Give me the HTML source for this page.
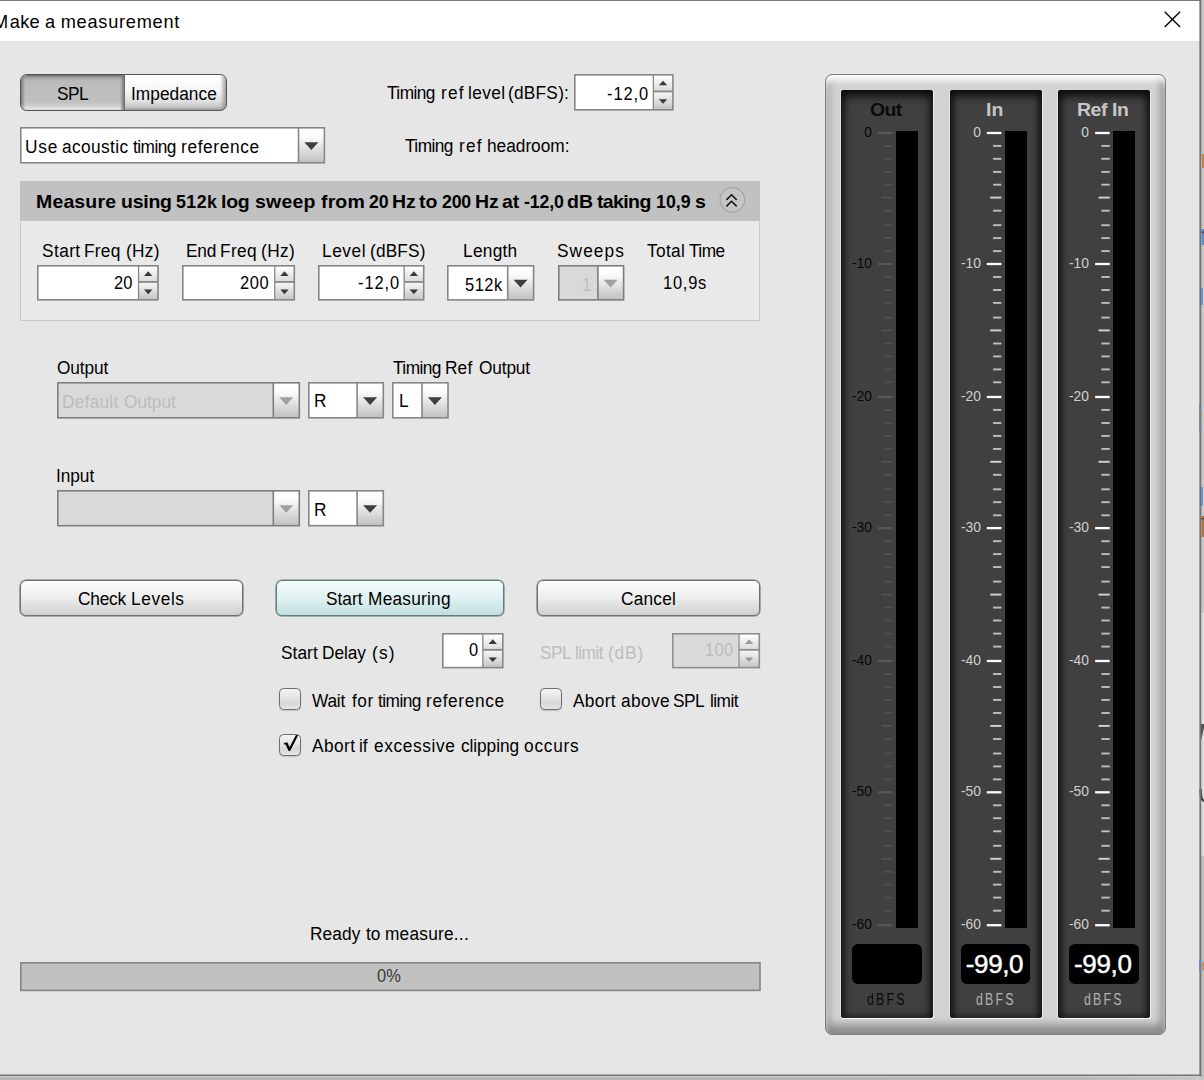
<!DOCTYPE html><html><head><meta charset="utf-8"><title>Make a measurement</title><style>
*{box-sizing:border-box;margin:0;padding:0}
html,body{width:1204px;height:1080px;overflow:hidden;background:#e6e6e6;font-family:"Liberation Sans",sans-serif;font-size:17.33px;color:#000}
.a{position:absolute}
.t{position:absolute;white-space:pre;line-height:20px;height:20px;transform-origin:0 50%}
.b{font-weight:bold}
.dis{color:#bdbdbd}
#title{position:absolute;left:0;top:0;width:1200px;height:41px;background:#fff;border-top:1px solid #7c7c7c}
.field{position:absolute;background:#fff;border:1px solid #7a7a7a}
.field.d{background:#dbdbdb;border-color:#858585}
.sp{position:absolute;right:0;top:0;bottom:0;border-left:1px solid #a0a0a0;background:linear-gradient(#fbfbfb 0%,#dcdcdc 47%,#9a9a9a 47%,#9a9a9a 51%,#f4f4f4 51%,#cfcfcf 100%)}
.arr{position:absolute;right:0;top:0;bottom:0;background:linear-gradient(#fafafa,#e4e4e4 50%,#c6c6c6);border-left:1px solid #a0a0a0}
.btn{position:absolute;border:1px solid #707070;border-radius:6px;background:linear-gradient(#fefefe 0%,#ededed 50%,#cfcfcf 100%);box-shadow:0 0 0 0.55px #707070}
.cb{position:absolute;width:22px;height:22px;border:1.5px solid #6b6e76;border-radius:4.5px;background:linear-gradient(#f3f3f3 0,#e4e4e4 45%,#d6d6d6 70%,#e6e6e6 100%);box-shadow:0 1px 1px rgba(120,125,140,.35)}
svg{position:absolute;overflow:visible}
</style></head><body>
<div id="title"></div>
<div class="t" style="left:-7.00px;top:11.69px;font-size:18.2px;">M</div>
<div class="t" style="left:9.70px;top:11.69px;font-size:18.2px;letter-spacing:0.339px;">ake</div>
<div class="t" style="left:45.00px;top:11.69px;font-size:18.2px;">a</div>
<div class="t" style="left:60.70px;top:11.69px;font-size:18.2px;letter-spacing:0.749px;">measurement</div>
<svg class="a" style="left:1164px;top:11px" width="17" height="17"><path d="M0.7 0.7L16.1 16.1M16.1 0.7L0.7 16.1" stroke="#000" stroke-width="1.35" fill="none"/></svg>
<div class="a" style="left:1201px;top:0;width:3px;height:613px;background:linear-gradient(90deg,#b2b2b2,#d4d4d4)"></div>
<div class="a" style="left:1201px;top:613px;width:3px;height:243px;background:linear-gradient(90deg,#c6c6c6,#e6e6e6)"></div>
<div class="a" style="left:1201px;top:856px;width:3px;height:224px;background:linear-gradient(90deg,#a8a8a8,#cacaca)"></div>
<div class="a" style="left:0;top:1077px;width:1204px;height:3px;background:linear-gradient(90deg,#b6b6b6 0,#b8b8b8 90%,#c8c8c8 100%)"></div>
<svg class="a" style="left:0;top:0" width="1204" height="1080"><rect x="1202" y="154" width="2" height="14" fill="#c8803c"/><rect x="1201.5" y="229" width="2.5" height="16" fill="#5e8cd2"/><rect x="1200" y="231.5" width="4" height="1.5" fill="#555"/><rect x="1200.5" y="288" width="2.3" height="17" fill="#5f8fd6"/><rect x="1203" y="411" width="1" height="13" fill="#f0c48a"/><rect x="1200.5" y="487" width="2.3" height="19" fill="#5f8fd6"/><rect x="1201.5" y="516" width="2.5" height="21" fill="#b4743a"/><rect x="1200" y="518" width="4" height="1.5" fill="#555"/><path d="M1200 724H1204V728L1200.8 741H1200Z" fill="#555"/><path d="M1200.5 789Q1200.5 799.5 1204 801" stroke="#444" stroke-width="2.4" fill="none"/><rect x="1202" y="962" width="2" height="8" fill="#d09050"/><rect x="1199.4" y="0" width="1.7" height="1076.2" fill="#727272"/><rect x="0" y="1074.5" width="1201.1" height="1.7" fill="#727272"/><rect x="1199.4" y="404" width="1.7" height="28" fill="#5f7f9f"/><rect x="1199.4" y="960" width="1.7" height="11" fill="#5a7fc0"/></svg>
<div class="a" style="left:19.5px;top:74px;width:207.5px;height:37px;border:1.4px solid #555;border-radius:7px;overflow:hidden;background:linear-gradient(#ffffff 0,#f6f6f6 45%,#e0e0e0 75%,#c8c8c8 90%,#9c9c9c 100%);box-shadow:0 0 0.5px #555"><div class="a" style="right:0;top:0;width:6px;height:100%;background:linear-gradient(90deg,rgba(140,140,140,0),rgba(130,130,130,.75))"></div><div class="a" style="left:0;top:0;width:104px;height:100%;background:linear-gradient(#6c6c6c 0,#a2a2a2 2.5px,#bbbbbb 6px,#c0c0c0 78%,#d4d4d4 90%,#f4f4f4 100%);border-right:1.2px solid #6a6a6a;box-shadow:inset 3.5px 0 3px -1.5px #7a7a7a,inset -3.5px 0 3px -1.5px #7a7a7a"></div></div>
<div class="t" style="left:56.71px;top:83.85px;font-size:19.2px;letter-spacing:-0.600px;transform:scaleX(0.9);">SPL</div>
<div class="t" style="left:130.77px;top:83.85px;font-size:19.2px;letter-spacing:0.046px;transform:scaleX(0.9);">Impedance</div>
<div class="t" style="left:387.30px;top:83.45px;font-size:19.2px;letter-spacing:-0.600px;transform:scaleX(0.9);">Timing</div>
<div class="t" style="left:441.13px;top:83.45px;font-size:19.2px;letter-spacing:1.300px;transform:scaleX(0.9);">ref</div>
<div class="t" style="left:468.42px;top:83.45px;font-size:19.2px;letter-spacing:0.439px;transform:scaleX(0.9);">level</div>
<div class="t" style="left:508.41px;top:83.45px;font-size:19.2px;letter-spacing:0.264px;transform:scaleX(0.9);">(dBFS):</div>
<svg class="a" style="left:573.9px;top:73.9px" width="99.70000000000005" height="36.599999999999994"><defs><linearGradient id="g1a" x1="0" y1="0" x2="0" y2="1"><stop offset="0" stop-color="#ffffff"/><stop offset="1" stop-color="#dcdcdc"/></linearGradient><linearGradient id="g1b" x1="0" y1="0" x2="0" y2="1"><stop offset="0" stop-color="#f6f6f6"/><stop offset="1" stop-color="#c6c6c6"/></linearGradient></defs><rect x="0" y="0" width="99.70000000000005" height="36.599999999999994" fill="#868686"/><rect x="1.6" y="1.6" width="77.10" height="33.40" fill="#fff"/><rect x="79.98" y="1.6" width="18.12" height="14.95" fill="url(#g1a)"/><rect x="79.98" y="18.35" width="18.12" height="16.65" fill="url(#g1b)"/><path d="M84.84 11.36L93.24 11.36L89.04 6.66Z" fill="#383838"/><path d="M84.84 25.25L93.24 25.25L89.04 29.85Z" fill="#383838"/></svg>
<div class="t" style="left:607.31px;top:83.65px;font-size:19.2px;letter-spacing:1.068px;transform:scaleX(0.857);">-12,0</div>
<svg class="a" style="left:19.9px;top:127.1px" width="305.20000000000005" height="36.599999999999994"><defs><linearGradient id="g2" x1="0" y1="0" x2="0" y2="1"><stop offset="0" stop-color="#ffffff"/><stop offset="0.25" stop-color="#fbfbfb"/><stop offset="1" stop-color="#c2c2c2"/></linearGradient></defs><rect x="0" y="0" width="305.20000000000005" height="36.599999999999994" fill="#868686"/><rect x="1.6" y="1.6" width="276.10" height="33.40" fill="#fff"/><rect x="279.30" y="1.6" width="24.30" height="33.40" fill="url(#g2)"/><path d="M284.35 15.19L298.35 15.19L291.35 22.89Z" fill="#3e3e3e"/></svg>
<div class="t" style="left:25.34px;top:136.65px;font-size:19.2px;letter-spacing:0.906px;transform:scaleX(0.9);">Use</div>
<div class="t" style="left:61.88px;top:136.65px;font-size:19.2px;letter-spacing:0.441px;transform:scaleX(0.9);">acoustic</div>
<div class="t" style="left:133.49px;top:136.65px;font-size:19.2px;letter-spacing:-0.600px;transform:scaleX(0.9);">timing</div>
<div class="t" style="left:181.32px;top:136.65px;font-size:19.2px;letter-spacing:0.719px;transform:scaleX(0.9);">reference</div>
<div class="t" style="left:405.20px;top:136.45px;font-size:19.2px;letter-spacing:-0.600px;transform:scaleX(0.9);">Timing</div>
<div class="t" style="left:458.78px;top:136.45px;font-size:19.2px;letter-spacing:1.300px;transform:scaleX(0.9);">ref</div>
<div class="t" style="left:486.63px;top:136.45px;font-size:19.2px;letter-spacing:-0.011px;transform:scaleX(0.9);">headroom:</div>
<div class="a" style="left:20px;top:181px;width:740px;height:140px;background:#e9e9e9;border:1px solid #c8c8c8"></div>
<div class="a" style="left:20px;top:181px;width:740px;height:40px;background:#c1c1c1"></div>
<div class="t b" style="left:36.33px;top:191.92px;font-size:18.4px;letter-spacing:0.141px;transform:scaleX(1.06);">Measure</div>
<div class="t b" style="left:120.63px;top:191.92px;font-size:18.4px;letter-spacing:-0.244px;transform:scaleX(1.06);">using</div>
<div class="t b" style="left:176.12px;top:191.92px;font-size:18.4px;letter-spacing:0.490px;transform:scaleX(0.965);">512k</div>
<div class="t b" style="left:221.43px;top:191.92px;font-size:18.4px;letter-spacing:-0.267px;transform:scaleX(1.06);">log</div>
<div class="t b" style="left:254.96px;top:191.92px;font-size:18.4px;letter-spacing:0.211px;transform:scaleX(1.06);">sweep</div>
<div class="t b" style="left:320.68px;top:191.92px;font-size:18.4px;letter-spacing:0.126px;transform:scaleX(1.06);">from</div>
<div class="t b" style="left:369.49px;top:191.92px;font-size:18.4px;transform:scaleX(0.965);">20</div>
<div class="t b" style="left:392.36px;top:191.92px;font-size:18.4px;transform:scaleX(1.06);">Hz</div>
<div class="t b" style="left:419.33px;top:191.92px;font-size:18.4px;transform:scaleX(1.06);">to</div>
<div class="t b" style="left:442.22px;top:191.92px;font-size:18.4px;letter-spacing:-0.227px;transform:scaleX(0.965);">200</div>
<div class="t b" style="left:475.16px;top:191.92px;font-size:18.4px;transform:scaleX(1.06);">Hz</div>
<div class="t b" style="left:501.88px;top:191.92px;font-size:18.4px;transform:scaleX(1.06);">at</div>
<div class="t b" style="left:523.52px;top:191.92px;font-size:18.4px;letter-spacing:-0.126px;transform:scaleX(0.965);">-12,0</div>
<div class="t b" style="left:567.25px;top:191.92px;font-size:18.4px;transform:scaleX(1.06);">dB</div>
<div class="t b" style="left:597.29px;top:191.92px;font-size:18.4px;letter-spacing:-0.588px;transform:scaleX(1.06);">taking</div>
<div class="t b" style="left:656.14px;top:191.92px;font-size:18.4px;letter-spacing:0.039px;transform:scaleX(0.965);">10,9</div>
<div class="t b" style="left:695.20px;top:191.92px;font-size:18.4px;transform:scaleX(1.06);">s</div>
<svg class="a" style="left:712px;top:182px" width="40" height="36"><circle cx="20.4" cy="17.85" r="12.3" fill="#c5c5c5" stroke="#a8a8a8" stroke-width="1.4"/><path d="M14.4 17.9L19.55 12.8L24.7 17.9M14.4 24.4L19.55 19.3L24.7 24.4" stroke="#111" stroke-width="1.5" fill="none"/></svg>
<div class="t" style="left:41.78px;top:241.15px;font-size:19.2px;letter-spacing:0.458px;transform:scaleX(0.9);">Start</div>
<div class="t" style="left:83.95px;top:241.15px;font-size:19.2px;letter-spacing:0.289px;transform:scaleX(0.9);">Freq</div>
<div class="t" style="left:125.71px;top:241.15px;font-size:19.2px;letter-spacing:0.351px;transform:scaleX(0.9);">(Hz)</div>
<div class="t" style="left:185.65px;top:241.15px;font-size:19.2px;letter-spacing:-0.242px;transform:scaleX(0.9);">End</div>
<div class="t" style="left:220.05px;top:241.15px;font-size:19.2px;letter-spacing:0.363px;transform:scaleX(0.9);">Freq</div>
<div class="t" style="left:261.21px;top:241.15px;font-size:19.2px;letter-spacing:0.462px;transform:scaleX(0.9);">(Hz)</div>
<div class="t" style="left:321.85px;top:241.15px;font-size:19.2px;letter-spacing:0.633px;transform:scaleX(0.9);">Level</div>
<div class="t" style="left:369.61px;top:241.15px;font-size:19.2px;letter-spacing:0.166px;transform:scaleX(0.9);">(dBFS)</div>
<div class="t" style="left:463.15px;top:241.15px;font-size:19.2px;letter-spacing:0.302px;transform:scaleX(0.9);">Length</div>
<div class="t" style="left:557.38px;top:241.15px;font-size:19.2px;letter-spacing:1.197px;transform:scaleX(0.9);">Sweeps</div>
<div class="t" style="left:646.64px;top:241.15px;font-size:19.2px;letter-spacing:0.361px;transform:scaleX(0.9);">Total</div>
<div class="t" style="left:689.00px;top:241.15px;font-size:19.2px;letter-spacing:-0.600px;transform:scaleX(0.9);">Time</div>
<svg class="a" style="left:37px;top:264.9px" width="121.80000000000001" height="35.60000000000002"><defs><linearGradient id="g3a" x1="0" y1="0" x2="0" y2="1"><stop offset="0" stop-color="#ffffff"/><stop offset="1" stop-color="#dcdcdc"/></linearGradient><linearGradient id="g3b" x1="0" y1="0" x2="0" y2="1"><stop offset="0" stop-color="#f6f6f6"/><stop offset="1" stop-color="#c6c6c6"/></linearGradient></defs><rect x="0" y="0" width="121.80000000000001" height="35.60000000000002" fill="#868686"/><rect x="1.6" y="1.6" width="99.30" height="32.40" fill="#fff"/><rect x="102.18" y="1.6" width="18.02" height="14.45" fill="url(#g3a)"/><rect x="102.18" y="17.85" width="18.02" height="16.15" fill="url(#g3b)"/><path d="M106.99 11.06L115.39 11.06L111.19 6.36Z" fill="#383838"/><path d="M106.99 24.56L115.39 24.56L111.19 29.16Z" fill="#383838"/></svg>
<div class="t" style="left:113.60px;top:272.75px;font-size:19.2px;transform:scaleX(0.857);">20</div>
<svg class="a" style="left:181.8px;top:264.9px" width="113.09999999999997" height="35.60000000000002"><defs><linearGradient id="g4a" x1="0" y1="0" x2="0" y2="1"><stop offset="0" stop-color="#ffffff"/><stop offset="1" stop-color="#dcdcdc"/></linearGradient><linearGradient id="g4b" x1="0" y1="0" x2="0" y2="1"><stop offset="0" stop-color="#f6f6f6"/><stop offset="1" stop-color="#c6c6c6"/></linearGradient></defs><rect x="0" y="0" width="113.09999999999997" height="35.60000000000002" fill="#868686"/><rect x="1.6" y="1.6" width="90.50" height="32.40" fill="#fff"/><rect x="93.38" y="1.6" width="18.12" height="14.45" fill="url(#g4a)"/><rect x="93.38" y="17.85" width="18.12" height="16.15" fill="url(#g4b)"/><path d="M98.24 11.06L106.64 11.06L102.44 6.36Z" fill="#383838"/><path d="M98.24 24.56L106.64 24.56L102.44 29.16Z" fill="#383838"/></svg>
<div class="t" style="left:239.83px;top:272.75px;font-size:19.2px;letter-spacing:0.758px;transform:scaleX(0.857);">200</div>
<svg class="a" style="left:318px;top:264.9px" width="106.5" height="35.60000000000002"><defs><linearGradient id="g5a" x1="0" y1="0" x2="0" y2="1"><stop offset="0" stop-color="#ffffff"/><stop offset="1" stop-color="#dcdcdc"/></linearGradient><linearGradient id="g5b" x1="0" y1="0" x2="0" y2="1"><stop offset="0" stop-color="#f6f6f6"/><stop offset="1" stop-color="#c6c6c6"/></linearGradient></defs><rect x="0" y="0" width="106.5" height="35.60000000000002" fill="#868686"/><rect x="1.6" y="1.6" width="83.90" height="32.40" fill="#fff"/><rect x="86.78" y="1.6" width="18.12" height="14.45" fill="url(#g5a)"/><rect x="86.78" y="17.85" width="18.12" height="16.15" fill="url(#g5b)"/><path d="M91.64 11.06L100.04 11.06L95.84 6.36Z" fill="#383838"/><path d="M91.64 24.56L100.04 24.56L95.84 29.16Z" fill="#383838"/></svg>
<div class="t" style="left:357.91px;top:272.75px;font-size:19.2px;letter-spacing:1.068px;transform:scaleX(0.857);">-12,0</div>
<svg class="a" style="left:447.4px;top:264.9px" width="87.39999999999998" height="35.700000000000045"><defs><linearGradient id="g6" x1="0" y1="0" x2="0" y2="1"><stop offset="0" stop-color="#ffffff"/><stop offset="0.25" stop-color="#fbfbfb"/><stop offset="1" stop-color="#c2c2c2"/></linearGradient></defs><rect x="0" y="0" width="87.39999999999998" height="35.700000000000045" fill="#868686"/><rect x="1.6" y="1.6" width="58.30" height="32.50" fill="#fff"/><rect x="61.50" y="1.6" width="24.30" height="32.50" fill="url(#g6)"/><path d="M66.55 14.82L80.55 14.82L73.55 22.52Z" fill="#3e3e3e"/></svg>
<div class="t" style="left:465.10px;top:274.85px;font-size:19.2px;letter-spacing:0.596px;transform:scaleX(0.857);">512k</div>
<svg class="a" style="left:557.7px;top:264.9px" width="66.39999999999998" height="35.700000000000045"><defs><linearGradient id="g7" x1="0" y1="0" x2="0" y2="1"><stop offset="0" stop-color="#ffffff"/><stop offset="0.25" stop-color="#fbfbfb"/><stop offset="1" stop-color="#c2c2c2"/></linearGradient></defs><rect x="0" y="0" width="66.39999999999998" height="35.700000000000045" fill="#7e7e7e"/><rect x="1.6" y="1.6" width="37.50" height="32.50" fill="#d9d9d9"/><rect x="40.70" y="1.6" width="24.10" height="32.50" fill="url(#g7)"/><path d="M45.65 14.82L59.65 14.82L52.65 22.52Z" fill="#a0a0a0"/></svg>
<div class="t dis" style="left:582.20px;top:275.05px;font-size:19.2px;transform:scaleX(0.857);">1</div>
<div class="t" style="left:663.00px;top:272.65px;font-size:19.2px;letter-spacing:0.893px;transform:scaleX(0.857);">10,9s</div>
<div class="t" style="left:57.19px;top:357.65px;font-size:19.2px;letter-spacing:-0.098px;transform:scaleX(0.9);">Output</div>
<div class="t" style="left:392.70px;top:358.05px;font-size:19.2px;letter-spacing:-0.600px;transform:scaleX(0.9);">Timing</div>
<div class="t" style="left:445.25px;top:358.05px;font-size:19.2px;letter-spacing:0.167px;transform:scaleX(0.9);">Ref</div>
<div class="t" style="left:478.59px;top:358.05px;font-size:19.2px;letter-spacing:-0.165px;transform:scaleX(0.9);">Output</div>
<svg class="a" style="left:56.8px;top:382px" width="243.09999999999997" height="36.60000000000002"><defs><linearGradient id="g8" x1="0" y1="0" x2="0" y2="1"><stop offset="0" stop-color="#ffffff"/><stop offset="0.25" stop-color="#fbfbfb"/><stop offset="1" stop-color="#c2c2c2"/></linearGradient></defs><rect x="0" y="0" width="243.09999999999997" height="36.60000000000002" fill="#7e7e7e"/><rect x="1.6" y="1.6" width="213.90" height="33.40" fill="#d9d9d9"/><rect x="217.10" y="1.6" width="24.40" height="33.40" fill="url(#g8)"/><path d="M222.20 15.19L236.20 15.19L229.20 22.89Z" fill="#a0a0a0"/></svg>
<div class="t dis" style="left:61.95px;top:391.55px;font-size:19.2px;letter-spacing:0.281px;transform:scaleX(0.9);">Default</div>
<div class="t dis" style="left:123.59px;top:391.55px;font-size:19.2px;letter-spacing:-0.010px;transform:scaleX(0.9);">Output</div>
<svg class="a" style="left:308px;top:382px" width="76.10000000000002" height="36.60000000000002"><defs><linearGradient id="g9" x1="0" y1="0" x2="0" y2="1"><stop offset="0" stop-color="#ffffff"/><stop offset="0.25" stop-color="#fbfbfb"/><stop offset="1" stop-color="#c2c2c2"/></linearGradient></defs><rect x="0" y="0" width="76.10000000000002" height="36.60000000000002" fill="#868686"/><rect x="1.6" y="1.6" width="46.70" height="33.40" fill="#fff"/><rect x="49.90" y="1.6" width="24.60" height="33.40" fill="url(#g9)"/><path d="M55.10 15.19L69.10 15.19L62.10 22.89Z" fill="#3e3e3e"/></svg>
<div class="t" style="left:314.02px;top:391.05px;font-size:19.2px;transform:scaleX(0.9);">R</div>
<svg class="a" style="left:392.1px;top:382px" width="56.799999999999955" height="36.60000000000002"><defs><linearGradient id="g10" x1="0" y1="0" x2="0" y2="1"><stop offset="0" stop-color="#ffffff"/><stop offset="0.25" stop-color="#fbfbfb"/><stop offset="1" stop-color="#c2c2c2"/></linearGradient></defs><rect x="0" y="0" width="56.799999999999955" height="36.60000000000002" fill="#868686"/><rect x="1.6" y="1.6" width="27.60" height="33.40" fill="#fff"/><rect x="30.80" y="1.6" width="24.40" height="33.40" fill="url(#g10)"/><path d="M35.90 15.19L49.90 15.19L42.90 22.89Z" fill="#3e3e3e"/></svg>
<div class="t" style="left:398.58px;top:391.05px;font-size:19.2px;transform:scaleX(0.9);">L</div>
<div class="t" style="left:55.67px;top:466.05px;font-size:19.2px;letter-spacing:-0.051px;transform:scaleX(0.9);">Input</div>
<svg class="a" style="left:56.8px;top:490.4px" width="243.09999999999997" height="36.5"><defs><linearGradient id="g11" x1="0" y1="0" x2="0" y2="1"><stop offset="0" stop-color="#ffffff"/><stop offset="0.25" stop-color="#fbfbfb"/><stop offset="1" stop-color="#c2c2c2"/></linearGradient></defs><rect x="0" y="0" width="243.09999999999997" height="36.5" fill="#7e7e7e"/><rect x="1.6" y="1.6" width="213.90" height="33.30" fill="#d9d9d9"/><rect x="217.10" y="1.6" width="24.40" height="33.30" fill="url(#g11)"/><path d="M222.20 15.15L236.20 15.15L229.20 22.85Z" fill="#a0a0a0"/></svg>
<svg class="a" style="left:308px;top:490.4px" width="76.10000000000002" height="36.5"><defs><linearGradient id="g12" x1="0" y1="0" x2="0" y2="1"><stop offset="0" stop-color="#ffffff"/><stop offset="0.25" stop-color="#fbfbfb"/><stop offset="1" stop-color="#c2c2c2"/></linearGradient></defs><rect x="0" y="0" width="76.10000000000002" height="36.5" fill="#868686"/><rect x="1.6" y="1.6" width="46.70" height="33.30" fill="#fff"/><rect x="49.90" y="1.6" width="24.60" height="33.30" fill="url(#g12)"/><path d="M55.10 15.15L69.10 15.15L62.10 22.85Z" fill="#3e3e3e"/></svg>
<div class="t" style="left:314.02px;top:499.55px;font-size:19.2px;transform:scaleX(0.9);">R</div>
<div class="btn" style="left:20px;top:580px;width:223px;height:36px"></div>
<div class="t" style="left:77.99px;top:588.65px;font-size:19.2px;letter-spacing:-0.211px;transform:scaleX(0.9);">Check</div>
<div class="t" style="left:130.95px;top:588.65px;font-size:19.2px;letter-spacing:0.676px;transform:scaleX(0.9);">Levels</div>
<div class="btn" style="left:276px;top:580px;width:228px;height:36px;background:linear-gradient(#f6fdfd 0%,#e0f1f1 50%,#c2dfdf 100%);border-color:#627d7d;box-shadow:0 0 0 0.55px #627d7d"></div>
<div class="t" style="left:326.18px;top:588.65px;font-size:19.2px;letter-spacing:0.014px;transform:scaleX(0.9);">Start</div>
<div class="t" style="left:367.85px;top:588.65px;font-size:19.2px;letter-spacing:0.268px;transform:scaleX(0.9);">Measuring</div>
<div class="btn" style="left:537px;top:580px;width:223px;height:36px"></div>
<div class="t" style="left:620.79px;top:588.65px;font-size:19.2px;letter-spacing:0.236px;transform:scaleX(0.9);">Cancel</div>
<div class="t" style="left:280.68px;top:642.85px;font-size:19.2px;letter-spacing:0.069px;transform:scaleX(0.9);">Start</div>
<div class="t" style="left:321.65px;top:642.85px;font-size:19.2px;letter-spacing:-0.091px;transform:scaleX(0.9);">Delay</div>
<div class="t" style="left:371.65px;top:642.85px;font-size:19.2px;letter-spacing:1.300px;transform:scaleX(0.9);">(s)</div>
<svg class="a" style="left:442.4px;top:632.8px" width="61.60000000000002" height="35.40000000000009"><defs><linearGradient id="g13a" x1="0" y1="0" x2="0" y2="1"><stop offset="0" stop-color="#ffffff"/><stop offset="1" stop-color="#dcdcdc"/></linearGradient><linearGradient id="g13b" x1="0" y1="0" x2="0" y2="1"><stop offset="0" stop-color="#f6f6f6"/><stop offset="1" stop-color="#c6c6c6"/></linearGradient></defs><rect x="0" y="0" width="61.60000000000002" height="35.40000000000009" fill="#868686"/><rect x="1.6" y="1.6" width="38.60" height="32.20" fill="#fff"/><rect x="41.48" y="1.6" width="18.52" height="14.35" fill="url(#g13a)"/><rect x="41.48" y="17.75" width="18.52" height="16.05" fill="url(#g13b)"/><path d="M46.54 11.00L54.94 11.00L50.74 6.30Z" fill="#383838"/><path d="M46.54 24.43L54.94 24.43L50.74 29.03Z" fill="#383838"/></svg>
<div class="t" style="left:468.90px;top:640.35px;font-size:19.2px;transform:scaleX(0.857);">0</div>
<div class="t dis" style="left:539.56px;top:642.55px;font-size:19.2px;letter-spacing:-0.600px;transform:scaleX(0.9);">SPL</div>
<div class="t dis" style="left:575.24px;top:642.55px;font-size:19.2px;letter-spacing:-0.600px;transform:scaleX(0.9);">limit</div>
<div class="t dis" style="left:608.11px;top:642.55px;font-size:19.2px;letter-spacing:0.937px;transform:scaleX(0.9);">(dB)</div>
<svg class="a" style="left:672.3px;top:632.8px" width="88.10000000000002" height="35.40000000000009"><defs><linearGradient id="g14a" x1="0" y1="0" x2="0" y2="1"><stop offset="0" stop-color="#ffffff"/><stop offset="1" stop-color="#dcdcdc"/></linearGradient><linearGradient id="g14b" x1="0" y1="0" x2="0" y2="1"><stop offset="0" stop-color="#f6f6f6"/><stop offset="1" stop-color="#c6c6c6"/></linearGradient></defs><rect x="0" y="0" width="88.10000000000002" height="35.40000000000009" fill="#8e8e8e"/><rect x="1.6" y="1.6" width="64.80" height="32.20" fill="#dadada"/><rect x="67.68" y="1.6" width="18.82" height="14.35" fill="url(#g14a)"/><rect x="67.68" y="17.75" width="18.82" height="16.05" fill="url(#g14b)"/><path d="M72.89 11.00L81.29 11.00L77.09 6.30Z" fill="#9a9a9a"/><path d="M72.89 24.43L81.29 24.43L77.09 29.03Z" fill="#9a9a9a"/></svg>
<div class="t dis" style="left:705.10px;top:640.35px;font-size:19.2px;letter-spacing:0.366px;transform:scaleX(0.857);">100</div>
<div class="cb" style="left:279px;top:688px"></div>
<div class="t" style="left:311.70px;top:691.25px;font-size:19.2px;letter-spacing:-0.221px;transform:scaleX(0.9);">Wait</div>
<div class="t" style="left:351.62px;top:691.25px;font-size:19.2px;letter-spacing:0.599px;transform:scaleX(0.9);">for</div>
<div class="t" style="left:377.99px;top:691.25px;font-size:19.2px;letter-spacing:-0.600px;transform:scaleX(0.9);">timing</div>
<div class="t" style="left:425.92px;top:691.25px;font-size:19.2px;letter-spacing:0.719px;transform:scaleX(0.9);">reference</div>
<div class="cb" style="left:540px;top:688px"></div>
<div class="t" style="left:572.50px;top:691.25px;font-size:19.2px;letter-spacing:0.366px;transform:scaleX(0.9);">Abort</div>
<div class="t" style="left:620.58px;top:691.25px;font-size:19.2px;letter-spacing:0.400px;transform:scaleX(0.9);">above</div>
<div class="t" style="left:673.46px;top:691.25px;font-size:19.2px;letter-spacing:-0.600px;transform:scaleX(0.9);">SPL</div>
<div class="t" style="left:709.59px;top:691.25px;font-size:19.2px;letter-spacing:-0.600px;transform:scaleX(0.9);">limit</div>
<div class="cb" style="left:279px;top:734px"></div>
<svg class="a" style="left:279px;top:734px" width="22" height="22"><path d="M4.4 10.3L5.2 8.9L8.3 8.3L10.6 13.3L16.9 0.9L19.2 1.2L11.1 17.1L9.6 17.1L6.6 10.4Z" fill="#000"/></svg>
<div class="t" style="left:311.70px;top:736.45px;font-size:19.2px;letter-spacing:0.505px;transform:scaleX(0.9);">Abort</div>
<div class="t" style="left:359.26px;top:736.45px;font-size:19.2px;transform:scaleX(0.9);">if</div>
<div class="t" style="left:374.28px;top:736.45px;font-size:19.2px;letter-spacing:0.688px;transform:scaleX(0.9);">excessive</div>
<div class="t" style="left:460.58px;top:736.45px;font-size:19.2px;letter-spacing:-0.082px;transform:scaleX(0.9);">clipping</div>
<div class="t" style="left:523.78px;top:736.45px;font-size:19.2px;letter-spacing:0.859px;transform:scaleX(0.9);">occurs</div>
<div class="t" style="left:310.25px;top:924.35px;font-size:19.2px;letter-spacing:0.111px;transform:scaleX(0.9);">Ready</div>
<div class="t" style="left:366.25px;top:924.35px;font-size:19.2px;transform:scaleX(0.9);">to</div>
<div class="t" style="left:385.22px;top:924.35px;font-size:19.2px;letter-spacing:0.260px;transform:scaleX(0.9);">measure...</div>
<svg class="a" style="left:19.5px;top:961.7px" width="741" height="30"><rect x="0" y="0" width="740.8" height="29.2" fill="#868686"/><rect x="1.6" y="1.6" width="737.6" height="26" fill="#c1c1c1"/></svg>
<div class="t" style="left:376.80px;top:966.45px;font-size:19.2px;transform:scaleX(0.857);color:#3a3a3a">0%</div>
<div class="a" style="left:825px;top:74px;width:341px;height:961px;border:1px solid #7f7f7f;border-radius:7px;background:#d3d3d3;box-shadow:inset 0 7px 7px -2px #fff,inset 0 -13px 10px -4px #8a8a8a,inset 9px 0 7px -4px #b2b2b2,inset -9px 0 7px -4px #989898"></div>
<div class="a" style="left:841px;top:90px;width:92px;height:928px;background:#404040;border-radius:3px;box-shadow:inset 0 9px 8px -3px #0c0c0c,inset 7px 0 6px -3px #1c1c1c,inset -7px 0 6px -3px #1c1c1c,inset 0 -6px 6px -3px #2a2a2a,0 1px 0 #fbfbfb,1px 0 0 #ececec,1px 1px 0 #f4f4f4,-1px 0 0 rgba(240,240,240,.5)"></div>
<div class="t b" style="left:870.09px;top:100.02px;font-size:18.4px;letter-spacing:-0.600px;transform:scaleX(1.06);color:#0a0a0a">Out</div>
<div class="a" style="left:896.2px;top:130.6px;width:22.2px;height:797.2px;background:#000"></div>
<svg class="a" style="left:0;top:0" width="1204" height="1080"><rect x="878.1" y="131.85" width="14.6" height="2.3" fill="#575757"/><rect x="884.4" y="144.95" width="8.3" height="1.9" fill="#505050"/><rect x="884.4" y="157.85" width="8.3" height="1.9" fill="#505050"/><rect x="884.4" y="170.95" width="8.3" height="1.9" fill="#505050"/><rect x="884.4" y="183.75" width="8.3" height="1.9" fill="#505050"/><rect x="881.5" y="196.65" width="11.2" height="1.9" fill="#525252"/><rect x="884.4" y="209.75" width="8.3" height="1.9" fill="#505050"/><rect x="884.4" y="224.25" width="8.3" height="1.9" fill="#505050"/><rect x="884.4" y="237.15" width="8.3" height="1.9" fill="#505050"/><rect x="884.4" y="250.15" width="8.3" height="1.9" fill="#505050"/><rect x="878.1" y="262.85" width="14.6" height="2.3" fill="#575757"/><rect x="884.4" y="276.05" width="8.3" height="1.9" fill="#505050"/><rect x="884.4" y="289.05" width="8.3" height="1.9" fill="#505050"/><rect x="884.4" y="301.95" width="8.3" height="1.9" fill="#505050"/><rect x="884.4" y="316.65" width="8.3" height="1.9" fill="#505050"/><rect x="881.5" y="329.45" width="11.2" height="1.9" fill="#525252"/><rect x="884.4" y="342.55" width="8.3" height="1.9" fill="#505050"/><rect x="884.4" y="355.45" width="8.3" height="1.9" fill="#505050"/><rect x="884.4" y="368.45" width="8.3" height="1.9" fill="#505050"/><rect x="884.4" y="381.35" width="8.3" height="1.9" fill="#505050"/><rect x="878.1" y="395.85" width="14.6" height="2.3" fill="#575757"/><rect x="884.4" y="408.95" width="8.3" height="1.9" fill="#505050"/><rect x="884.4" y="422.05" width="8.3" height="1.9" fill="#505050"/><rect x="884.4" y="434.95" width="8.3" height="1.9" fill="#505050"/><rect x="884.4" y="447.95" width="8.3" height="1.9" fill="#505050"/><rect x="881.5" y="460.85" width="11.2" height="1.9" fill="#525252"/><rect x="884.4" y="473.85" width="8.3" height="1.9" fill="#505050"/><rect x="884.4" y="488.35" width="8.3" height="1.9" fill="#505050"/><rect x="884.4" y="501.25" width="8.3" height="1.9" fill="#505050"/><rect x="884.4" y="514.35" width="8.3" height="1.9" fill="#505050"/><rect x="878.1" y="526.95" width="14.6" height="2.3" fill="#575757"/><rect x="884.4" y="540.25" width="8.3" height="1.9" fill="#505050"/><rect x="884.4" y="553.15" width="8.3" height="1.9" fill="#505050"/><rect x="884.4" y="566.15" width="8.3" height="1.9" fill="#505050"/><rect x="884.4" y="580.65" width="8.3" height="1.9" fill="#505050"/><rect x="881.5" y="593.65" width="11.2" height="1.9" fill="#525252"/><rect x="884.4" y="606.65" width="8.3" height="1.9" fill="#505050"/><rect x="884.4" y="619.55" width="8.3" height="1.9" fill="#505050"/><rect x="884.4" y="632.65" width="8.3" height="1.9" fill="#505050"/><rect x="884.4" y="645.65" width="8.3" height="1.9" fill="#505050"/><rect x="878.1" y="659.85" width="14.6" height="2.3" fill="#575757"/><rect x="884.4" y="673.05" width="8.3" height="1.9" fill="#505050"/><rect x="884.4" y="686.05" width="8.3" height="1.9" fill="#505050"/><rect x="884.4" y="698.95" width="8.3" height="1.9" fill="#505050"/><rect x="884.4" y="712.05" width="8.3" height="1.9" fill="#505050"/><rect x="881.5" y="724.95" width="11.2" height="1.9" fill="#525252"/><rect x="884.4" y="738.05" width="8.3" height="1.9" fill="#505050"/><rect x="884.4" y="752.55" width="8.3" height="1.9" fill="#505050"/><rect x="884.4" y="765.45" width="8.3" height="1.9" fill="#505050"/><rect x="884.4" y="778.45" width="8.3" height="1.9" fill="#505050"/><rect x="878.1" y="791.15" width="14.6" height="2.3" fill="#575757"/><rect x="884.4" y="804.35" width="8.3" height="1.9" fill="#505050"/><rect x="884.4" y="817.25" width="8.3" height="1.9" fill="#505050"/><rect x="884.4" y="830.35" width="8.3" height="1.9" fill="#505050"/><rect x="884.4" y="844.85" width="8.3" height="1.9" fill="#505050"/><rect x="881.5" y="857.85" width="11.2" height="1.9" fill="#525252"/><rect x="884.4" y="870.85" width="8.3" height="1.9" fill="#505050"/><rect x="884.4" y="883.65" width="8.3" height="1.9" fill="#505050"/><rect x="884.4" y="896.65" width="8.3" height="1.9" fill="#505050"/><rect x="884.4" y="909.75" width="8.3" height="1.9" fill="#505050"/><rect x="878.1" y="924.05" width="14.6" height="2.3" fill="#575757"/></svg>
<div class="t" style="left:821px;width:51px;top:121.94px;text-align:right;font-size:14.9px;color:#080808;transform:scaleX(0.93);transform-origin:100% 50%">0</div>
<div class="t" style="left:821px;width:51px;top:252.94px;text-align:right;font-size:14.9px;color:#080808;transform:scaleX(0.93);transform-origin:100% 50%">-10</div>
<div class="t" style="left:821px;width:51px;top:385.94px;text-align:right;font-size:14.9px;color:#080808;transform:scaleX(0.93);transform-origin:100% 50%">-20</div>
<div class="t" style="left:821px;width:51px;top:517.04px;text-align:right;font-size:14.9px;color:#080808;transform:scaleX(0.93);transform-origin:100% 50%">-30</div>
<div class="t" style="left:821px;width:51px;top:649.94px;text-align:right;font-size:14.9px;color:#080808;transform:scaleX(0.93);transform-origin:100% 50%">-40</div>
<div class="t" style="left:821px;width:51px;top:781.24px;text-align:right;font-size:14.9px;color:#080808;transform:scaleX(0.93);transform-origin:100% 50%">-50</div>
<div class="t" style="left:821px;width:51px;top:914.14px;text-align:right;font-size:14.9px;color:#080808;transform:scaleX(0.93);transform-origin:100% 50%">-60</div>
<div class="a" style="left:852.2px;top:944px;width:69.6px;height:40px;background:#000;border-radius:6px"></div>
<div class="t" style="left:867.44px;top:990.46px;font-size:16px;letter-spacing:2.886px;transform:scaleX(0.77);color:#0a0a0a">dBFS</div>
<div class="a" style="left:949.7px;top:90px;width:92px;height:928px;background:#404040;border-radius:3px;box-shadow:inset 0 9px 8px -3px #0c0c0c,inset 7px 0 6px -3px #1c1c1c,inset -7px 0 6px -3px #1c1c1c,inset 0 -6px 6px -3px #2a2a2a,0 1px 0 #fbfbfb,1px 0 0 #ececec,1px 1px 0 #f4f4f4,-1px 0 0 rgba(240,240,240,.5)"></div>
<div class="t b" style="left:985.50px;top:100.02px;font-size:18.4px;transform:scaleX(1.06);color:#c6c6c6">In</div>
<div class="a" style="left:1004.9px;top:130.6px;width:22.2px;height:797.2px;background:#000"></div>
<svg class="a" style="left:0;top:0" width="1204" height="1080"><rect x="986.8" y="131.85" width="14.6" height="2.3" fill="#fdfdfd"/><rect x="993.1" y="144.95" width="8.3" height="1.9" fill="#bebebe"/><rect x="993.1" y="157.85" width="8.3" height="1.9" fill="#bebebe"/><rect x="993.1" y="170.95" width="8.3" height="1.9" fill="#bebebe"/><rect x="993.1" y="183.75" width="8.3" height="1.9" fill="#bebebe"/><rect x="990.2" y="196.65" width="11.2" height="1.9" fill="#d2d2d2"/><rect x="993.1" y="209.75" width="8.3" height="1.9" fill="#bebebe"/><rect x="993.1" y="224.25" width="8.3" height="1.9" fill="#bebebe"/><rect x="993.1" y="237.15" width="8.3" height="1.9" fill="#bebebe"/><rect x="993.1" y="250.15" width="8.3" height="1.9" fill="#bebebe"/><rect x="986.8" y="262.85" width="14.6" height="2.3" fill="#fdfdfd"/><rect x="993.1" y="276.05" width="8.3" height="1.9" fill="#bebebe"/><rect x="993.1" y="289.05" width="8.3" height="1.9" fill="#bebebe"/><rect x="993.1" y="301.95" width="8.3" height="1.9" fill="#bebebe"/><rect x="993.1" y="316.65" width="8.3" height="1.9" fill="#bebebe"/><rect x="990.2" y="329.45" width="11.2" height="1.9" fill="#d2d2d2"/><rect x="993.1" y="342.55" width="8.3" height="1.9" fill="#bebebe"/><rect x="993.1" y="355.45" width="8.3" height="1.9" fill="#bebebe"/><rect x="993.1" y="368.45" width="8.3" height="1.9" fill="#bebebe"/><rect x="993.1" y="381.35" width="8.3" height="1.9" fill="#bebebe"/><rect x="986.8" y="395.85" width="14.6" height="2.3" fill="#fdfdfd"/><rect x="993.1" y="408.95" width="8.3" height="1.9" fill="#bebebe"/><rect x="993.1" y="422.05" width="8.3" height="1.9" fill="#bebebe"/><rect x="993.1" y="434.95" width="8.3" height="1.9" fill="#bebebe"/><rect x="993.1" y="447.95" width="8.3" height="1.9" fill="#bebebe"/><rect x="990.2" y="460.85" width="11.2" height="1.9" fill="#d2d2d2"/><rect x="993.1" y="473.85" width="8.3" height="1.9" fill="#bebebe"/><rect x="993.1" y="488.35" width="8.3" height="1.9" fill="#bebebe"/><rect x="993.1" y="501.25" width="8.3" height="1.9" fill="#bebebe"/><rect x="993.1" y="514.35" width="8.3" height="1.9" fill="#bebebe"/><rect x="986.8" y="526.95" width="14.6" height="2.3" fill="#fdfdfd"/><rect x="993.1" y="540.25" width="8.3" height="1.9" fill="#bebebe"/><rect x="993.1" y="553.15" width="8.3" height="1.9" fill="#bebebe"/><rect x="993.1" y="566.15" width="8.3" height="1.9" fill="#bebebe"/><rect x="993.1" y="580.65" width="8.3" height="1.9" fill="#bebebe"/><rect x="990.2" y="593.65" width="11.2" height="1.9" fill="#d2d2d2"/><rect x="993.1" y="606.65" width="8.3" height="1.9" fill="#bebebe"/><rect x="993.1" y="619.55" width="8.3" height="1.9" fill="#bebebe"/><rect x="993.1" y="632.65" width="8.3" height="1.9" fill="#bebebe"/><rect x="993.1" y="645.65" width="8.3" height="1.9" fill="#bebebe"/><rect x="986.8" y="659.85" width="14.6" height="2.3" fill="#fdfdfd"/><rect x="993.1" y="673.05" width="8.3" height="1.9" fill="#bebebe"/><rect x="993.1" y="686.05" width="8.3" height="1.9" fill="#bebebe"/><rect x="993.1" y="698.95" width="8.3" height="1.9" fill="#bebebe"/><rect x="993.1" y="712.05" width="8.3" height="1.9" fill="#bebebe"/><rect x="990.2" y="724.95" width="11.2" height="1.9" fill="#d2d2d2"/><rect x="993.1" y="738.05" width="8.3" height="1.9" fill="#bebebe"/><rect x="993.1" y="752.55" width="8.3" height="1.9" fill="#bebebe"/><rect x="993.1" y="765.45" width="8.3" height="1.9" fill="#bebebe"/><rect x="993.1" y="778.45" width="8.3" height="1.9" fill="#bebebe"/><rect x="986.8" y="791.15" width="14.6" height="2.3" fill="#fdfdfd"/><rect x="993.1" y="804.35" width="8.3" height="1.9" fill="#bebebe"/><rect x="993.1" y="817.25" width="8.3" height="1.9" fill="#bebebe"/><rect x="993.1" y="830.35" width="8.3" height="1.9" fill="#bebebe"/><rect x="993.1" y="844.85" width="8.3" height="1.9" fill="#bebebe"/><rect x="990.2" y="857.85" width="11.2" height="1.9" fill="#d2d2d2"/><rect x="993.1" y="870.85" width="8.3" height="1.9" fill="#bebebe"/><rect x="993.1" y="883.65" width="8.3" height="1.9" fill="#bebebe"/><rect x="993.1" y="896.65" width="8.3" height="1.9" fill="#bebebe"/><rect x="993.1" y="909.75" width="8.3" height="1.9" fill="#bebebe"/><rect x="986.8" y="924.05" width="14.6" height="2.3" fill="#fdfdfd"/></svg>
<div class="t" style="left:929.7px;width:51px;top:121.94px;text-align:right;font-size:14.9px;color:#cfcfcf;transform:scaleX(0.93);transform-origin:100% 50%">0</div>
<div class="t" style="left:929.7px;width:51px;top:252.94px;text-align:right;font-size:14.9px;color:#cfcfcf;transform:scaleX(0.93);transform-origin:100% 50%">-10</div>
<div class="t" style="left:929.7px;width:51px;top:385.94px;text-align:right;font-size:14.9px;color:#cfcfcf;transform:scaleX(0.93);transform-origin:100% 50%">-20</div>
<div class="t" style="left:929.7px;width:51px;top:517.04px;text-align:right;font-size:14.9px;color:#cfcfcf;transform:scaleX(0.93);transform-origin:100% 50%">-30</div>
<div class="t" style="left:929.7px;width:51px;top:649.94px;text-align:right;font-size:14.9px;color:#cfcfcf;transform:scaleX(0.93);transform-origin:100% 50%">-40</div>
<div class="t" style="left:929.7px;width:51px;top:781.24px;text-align:right;font-size:14.9px;color:#cfcfcf;transform:scaleX(0.93);transform-origin:100% 50%">-50</div>
<div class="t" style="left:929.7px;width:51px;top:914.14px;text-align:right;font-size:14.9px;color:#cfcfcf;transform:scaleX(0.93);transform-origin:100% 50%">-60</div>
<div class="a" style="left:960.9000000000001px;top:944px;width:69.6px;height:40px;background:#000;border-radius:6px"></div>
<div class="t" style="left:965.79px;top:954.49px;font-size:26px;letter-spacing:-0.375px;color:#fff;-webkit-text-stroke:0.45px #fff">-99,0</div>
<div class="t" style="left:976.14px;top:990.46px;font-size:16px;letter-spacing:2.886px;transform:scaleX(0.77);color:#b2b2b2">dBFS</div>
<div class="a" style="left:1058px;top:90px;width:92px;height:928px;background:#404040;border-radius:3px;box-shadow:inset 0 9px 8px -3px #0c0c0c,inset 7px 0 6px -3px #1c1c1c,inset -7px 0 6px -3px #1c1c1c,inset 0 -6px 6px -3px #2a2a2a,0 1px 0 #fbfbfb,1px 0 0 #ececec,1px 1px 0 #f4f4f4,-1px 0 0 rgba(240,240,240,.5)"></div>
<div class="t b" style="left:1077.43px;top:100.02px;font-size:18.4px;letter-spacing:-0.434px;transform:scaleX(1.06);color:#c6c6c6">Ref In</div>
<div class="a" style="left:1113.2px;top:130.6px;width:22.2px;height:797.2px;background:#000"></div>
<svg class="a" style="left:0;top:0" width="1204" height="1080"><rect x="1095.1" y="131.85" width="14.6" height="2.3" fill="#fdfdfd"/><rect x="1101.4" y="144.95" width="8.3" height="1.9" fill="#bebebe"/><rect x="1101.4" y="157.85" width="8.3" height="1.9" fill="#bebebe"/><rect x="1101.4" y="170.95" width="8.3" height="1.9" fill="#bebebe"/><rect x="1101.4" y="183.75" width="8.3" height="1.9" fill="#bebebe"/><rect x="1098.5" y="196.65" width="11.2" height="1.9" fill="#d2d2d2"/><rect x="1101.4" y="209.75" width="8.3" height="1.9" fill="#bebebe"/><rect x="1101.4" y="224.25" width="8.3" height="1.9" fill="#bebebe"/><rect x="1101.4" y="237.15" width="8.3" height="1.9" fill="#bebebe"/><rect x="1101.4" y="250.15" width="8.3" height="1.9" fill="#bebebe"/><rect x="1095.1" y="262.85" width="14.6" height="2.3" fill="#fdfdfd"/><rect x="1101.4" y="276.05" width="8.3" height="1.9" fill="#bebebe"/><rect x="1101.4" y="289.05" width="8.3" height="1.9" fill="#bebebe"/><rect x="1101.4" y="301.95" width="8.3" height="1.9" fill="#bebebe"/><rect x="1101.4" y="316.65" width="8.3" height="1.9" fill="#bebebe"/><rect x="1098.5" y="329.45" width="11.2" height="1.9" fill="#d2d2d2"/><rect x="1101.4" y="342.55" width="8.3" height="1.9" fill="#bebebe"/><rect x="1101.4" y="355.45" width="8.3" height="1.9" fill="#bebebe"/><rect x="1101.4" y="368.45" width="8.3" height="1.9" fill="#bebebe"/><rect x="1101.4" y="381.35" width="8.3" height="1.9" fill="#bebebe"/><rect x="1095.1" y="395.85" width="14.6" height="2.3" fill="#fdfdfd"/><rect x="1101.4" y="408.95" width="8.3" height="1.9" fill="#bebebe"/><rect x="1101.4" y="422.05" width="8.3" height="1.9" fill="#bebebe"/><rect x="1101.4" y="434.95" width="8.3" height="1.9" fill="#bebebe"/><rect x="1101.4" y="447.95" width="8.3" height="1.9" fill="#bebebe"/><rect x="1098.5" y="460.85" width="11.2" height="1.9" fill="#d2d2d2"/><rect x="1101.4" y="473.85" width="8.3" height="1.9" fill="#bebebe"/><rect x="1101.4" y="488.35" width="8.3" height="1.9" fill="#bebebe"/><rect x="1101.4" y="501.25" width="8.3" height="1.9" fill="#bebebe"/><rect x="1101.4" y="514.35" width="8.3" height="1.9" fill="#bebebe"/><rect x="1095.1" y="526.95" width="14.6" height="2.3" fill="#fdfdfd"/><rect x="1101.4" y="540.25" width="8.3" height="1.9" fill="#bebebe"/><rect x="1101.4" y="553.15" width="8.3" height="1.9" fill="#bebebe"/><rect x="1101.4" y="566.15" width="8.3" height="1.9" fill="#bebebe"/><rect x="1101.4" y="580.65" width="8.3" height="1.9" fill="#bebebe"/><rect x="1098.5" y="593.65" width="11.2" height="1.9" fill="#d2d2d2"/><rect x="1101.4" y="606.65" width="8.3" height="1.9" fill="#bebebe"/><rect x="1101.4" y="619.55" width="8.3" height="1.9" fill="#bebebe"/><rect x="1101.4" y="632.65" width="8.3" height="1.9" fill="#bebebe"/><rect x="1101.4" y="645.65" width="8.3" height="1.9" fill="#bebebe"/><rect x="1095.1" y="659.85" width="14.6" height="2.3" fill="#fdfdfd"/><rect x="1101.4" y="673.05" width="8.3" height="1.9" fill="#bebebe"/><rect x="1101.4" y="686.05" width="8.3" height="1.9" fill="#bebebe"/><rect x="1101.4" y="698.95" width="8.3" height="1.9" fill="#bebebe"/><rect x="1101.4" y="712.05" width="8.3" height="1.9" fill="#bebebe"/><rect x="1098.5" y="724.95" width="11.2" height="1.9" fill="#d2d2d2"/><rect x="1101.4" y="738.05" width="8.3" height="1.9" fill="#bebebe"/><rect x="1101.4" y="752.55" width="8.3" height="1.9" fill="#bebebe"/><rect x="1101.4" y="765.45" width="8.3" height="1.9" fill="#bebebe"/><rect x="1101.4" y="778.45" width="8.3" height="1.9" fill="#bebebe"/><rect x="1095.1" y="791.15" width="14.6" height="2.3" fill="#fdfdfd"/><rect x="1101.4" y="804.35" width="8.3" height="1.9" fill="#bebebe"/><rect x="1101.4" y="817.25" width="8.3" height="1.9" fill="#bebebe"/><rect x="1101.4" y="830.35" width="8.3" height="1.9" fill="#bebebe"/><rect x="1101.4" y="844.85" width="8.3" height="1.9" fill="#bebebe"/><rect x="1098.5" y="857.85" width="11.2" height="1.9" fill="#d2d2d2"/><rect x="1101.4" y="870.85" width="8.3" height="1.9" fill="#bebebe"/><rect x="1101.4" y="883.65" width="8.3" height="1.9" fill="#bebebe"/><rect x="1101.4" y="896.65" width="8.3" height="1.9" fill="#bebebe"/><rect x="1101.4" y="909.75" width="8.3" height="1.9" fill="#bebebe"/><rect x="1095.1" y="924.05" width="14.6" height="2.3" fill="#fdfdfd"/></svg>
<div class="t" style="left:1038px;width:51px;top:121.94px;text-align:right;font-size:14.9px;color:#cfcfcf;transform:scaleX(0.93);transform-origin:100% 50%">0</div>
<div class="t" style="left:1038px;width:51px;top:252.94px;text-align:right;font-size:14.9px;color:#cfcfcf;transform:scaleX(0.93);transform-origin:100% 50%">-10</div>
<div class="t" style="left:1038px;width:51px;top:385.94px;text-align:right;font-size:14.9px;color:#cfcfcf;transform:scaleX(0.93);transform-origin:100% 50%">-20</div>
<div class="t" style="left:1038px;width:51px;top:517.04px;text-align:right;font-size:14.9px;color:#cfcfcf;transform:scaleX(0.93);transform-origin:100% 50%">-30</div>
<div class="t" style="left:1038px;width:51px;top:649.94px;text-align:right;font-size:14.9px;color:#cfcfcf;transform:scaleX(0.93);transform-origin:100% 50%">-40</div>
<div class="t" style="left:1038px;width:51px;top:781.24px;text-align:right;font-size:14.9px;color:#cfcfcf;transform:scaleX(0.93);transform-origin:100% 50%">-50</div>
<div class="t" style="left:1038px;width:51px;top:914.14px;text-align:right;font-size:14.9px;color:#cfcfcf;transform:scaleX(0.93);transform-origin:100% 50%">-60</div>
<div class="a" style="left:1069.2px;top:944px;width:69.6px;height:40px;background:#000;border-radius:6px"></div>
<div class="t" style="left:1074.09px;top:954.49px;font-size:26px;letter-spacing:-0.375px;color:#fff;-webkit-text-stroke:0.45px #fff">-99,0</div>
<div class="t" style="left:1084.44px;top:990.46px;font-size:16px;letter-spacing:2.886px;transform:scaleX(0.77);color:#b2b2b2">dBFS</div>
</body></html>
